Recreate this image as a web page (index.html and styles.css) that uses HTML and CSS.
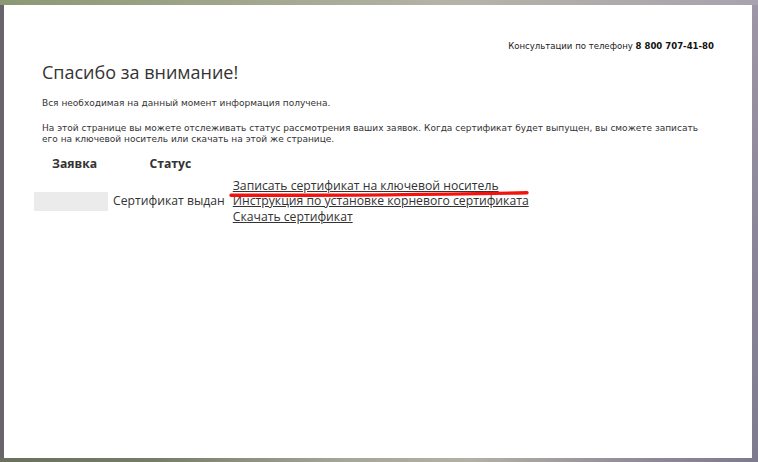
FILE: index.html
```html
<!DOCTYPE html>
<html lang="ru">
<head>
<meta charset="utf-8">
<title>Спасибо за внимание!</title>
<link rel="stylesheet" href="styles.css">
</head>
<body>
<div class="frame">
  <div class="edge-top"></div>
  <div class="middle">
    <div class="edge-left"></div>
    <main class="page">
      <div class="phone">Консультации по телефону <b>8 800 707-41-80</b></div>
      <h1 class="title">Спасибо за внимание!</h1>
      <p class="note">Вся необходимая на данный момент информация получена.</p>
      <p class="note">На этой странице вы можете отслеживать статус рассмотрения ваших заявок. Когда сертификат будет выпущен, вы сможете записать его на ключевой носитель или скачать на этой же странице.</p>
      <table class="orders">
        <thead>
          <tr><th class="c-id">Заявка</th><th class="c-status">Статус</th><th class="c-links"></th></tr>
        </thead>
        <tbody>
          <tr>
            <td class="c-id"><span class="masked"></span></td>
            <td class="c-status">Сертификат выдан</td>
            <td class="c-links">
              <div class="links">
                <a href="#">Записать сертификат на ключевой носитель</a>
                <a href="#">Инструкция по установке корневого сертификата</a>
                <a href="#">Скачать сертификат</a>
              </div>
              <svg class="mark" width="304" height="10" viewBox="0 0 304 10"><path d="M2 6.2 C 80 6.6, 200 5.6, 298 3.8" stroke="#f2130f" stroke-width="3.4" fill="none" stroke-linecap="round"/></svg>
            </td>
          </tr>
        </tbody>
      </table>
    </main>
    <div class="edge-right"></div>
  </div>
  <div class="edge-bottom"></div>
</div>
</body>
</html>
```
FILE: styles.css
```css
html, body {
  margin: 0;
  padding: 0;
}
body {
  width: 758px;
  height: 462px;
  overflow: hidden;
}
.frame {
  display: flex;
  flex-direction: column;
  height: 462px;
}
.edge-top {
  height: 5px;
  background: linear-gradient(90deg, #8c9874 0%, #a3a890 35%, #b5b3a8 60%, #a8a2ae 100%);
}
.middle {
  flex: 1;
  display: flex;
}
.edge-left {
  width: 4px;
  background: #69646c;
}
.edge-right {
  width: 6px;
  background: linear-gradient(180deg, #9d96a6 0%, #8a8598 50%, #7f7b8f 100%);
}
.edge-bottom {
  height: 4px;
  background: linear-gradient(90deg, #6a705c 0%, #767c66 20%, #a4a696 45%, #b3b1a4 62%, #8e8a98 85%, #7e7a8e 100%);
}
.page {
  flex: 1;
  background: #fff;
  padding: 35px 38px 0 38px;
  color: #333;
  font-family: "DejaVu Sans", Verdana, sans-serif;
}
.phone {
  text-align: right;
  font-family: "DejaVu Sans Condensed", "DejaVu Sans", sans-serif;
  font-size: 9.5px;
  line-height: 12px;
  color: #222;
}
.phone b {
  color: #111;
  font-weight: bold;
}
.title {
  margin: 7px 0 0 0;
  font-family: "Open Sans", sans-serif;
  font-weight: normal;
  font-size: 18px;
  color: #333;
  line-height: 26px;
}
.note {
  margin: 13px 0 0 0;
  font-size: 9px;
  line-height: 11.5px;
  color: #333;
}
.orders {
  margin: 9px 0 0 -8px;
  border-collapse: collapse;
  font-family: "Open Sans", sans-serif;
  font-size: 12.2px;
  color: #333;
}
.orders th {
  font-weight: bold;
  font-size: 12.2px;
  padding: 0 0 6px 0;
  text-align: center;
  color: #333;
}
.orders td {
  padding: 0;
  vertical-align: middle;
}
td.c-id {
  width: 74px;
}
.orders th.c-id {
  width: 56px;
  text-align: left;
  padding-left: 18px;
}
td.c-status {
  padding: 0 8px 0 5px;
  white-space: nowrap;
}
.masked {
  display: block;
  width: 74px;
  height: 19px;
  background: #ebebeb;
  margin-top: 1px;
}
.c-links {
  position: relative;
}
.links {
  display: flex;
  flex-direction: column;
  align-items: flex-start;
  line-height: 15.5px;
}
.links a {
  color: #333;
  text-decoration: underline;
}
.mark {
  position: absolute;
  left: -4px;
  top: 11px;
}
```
